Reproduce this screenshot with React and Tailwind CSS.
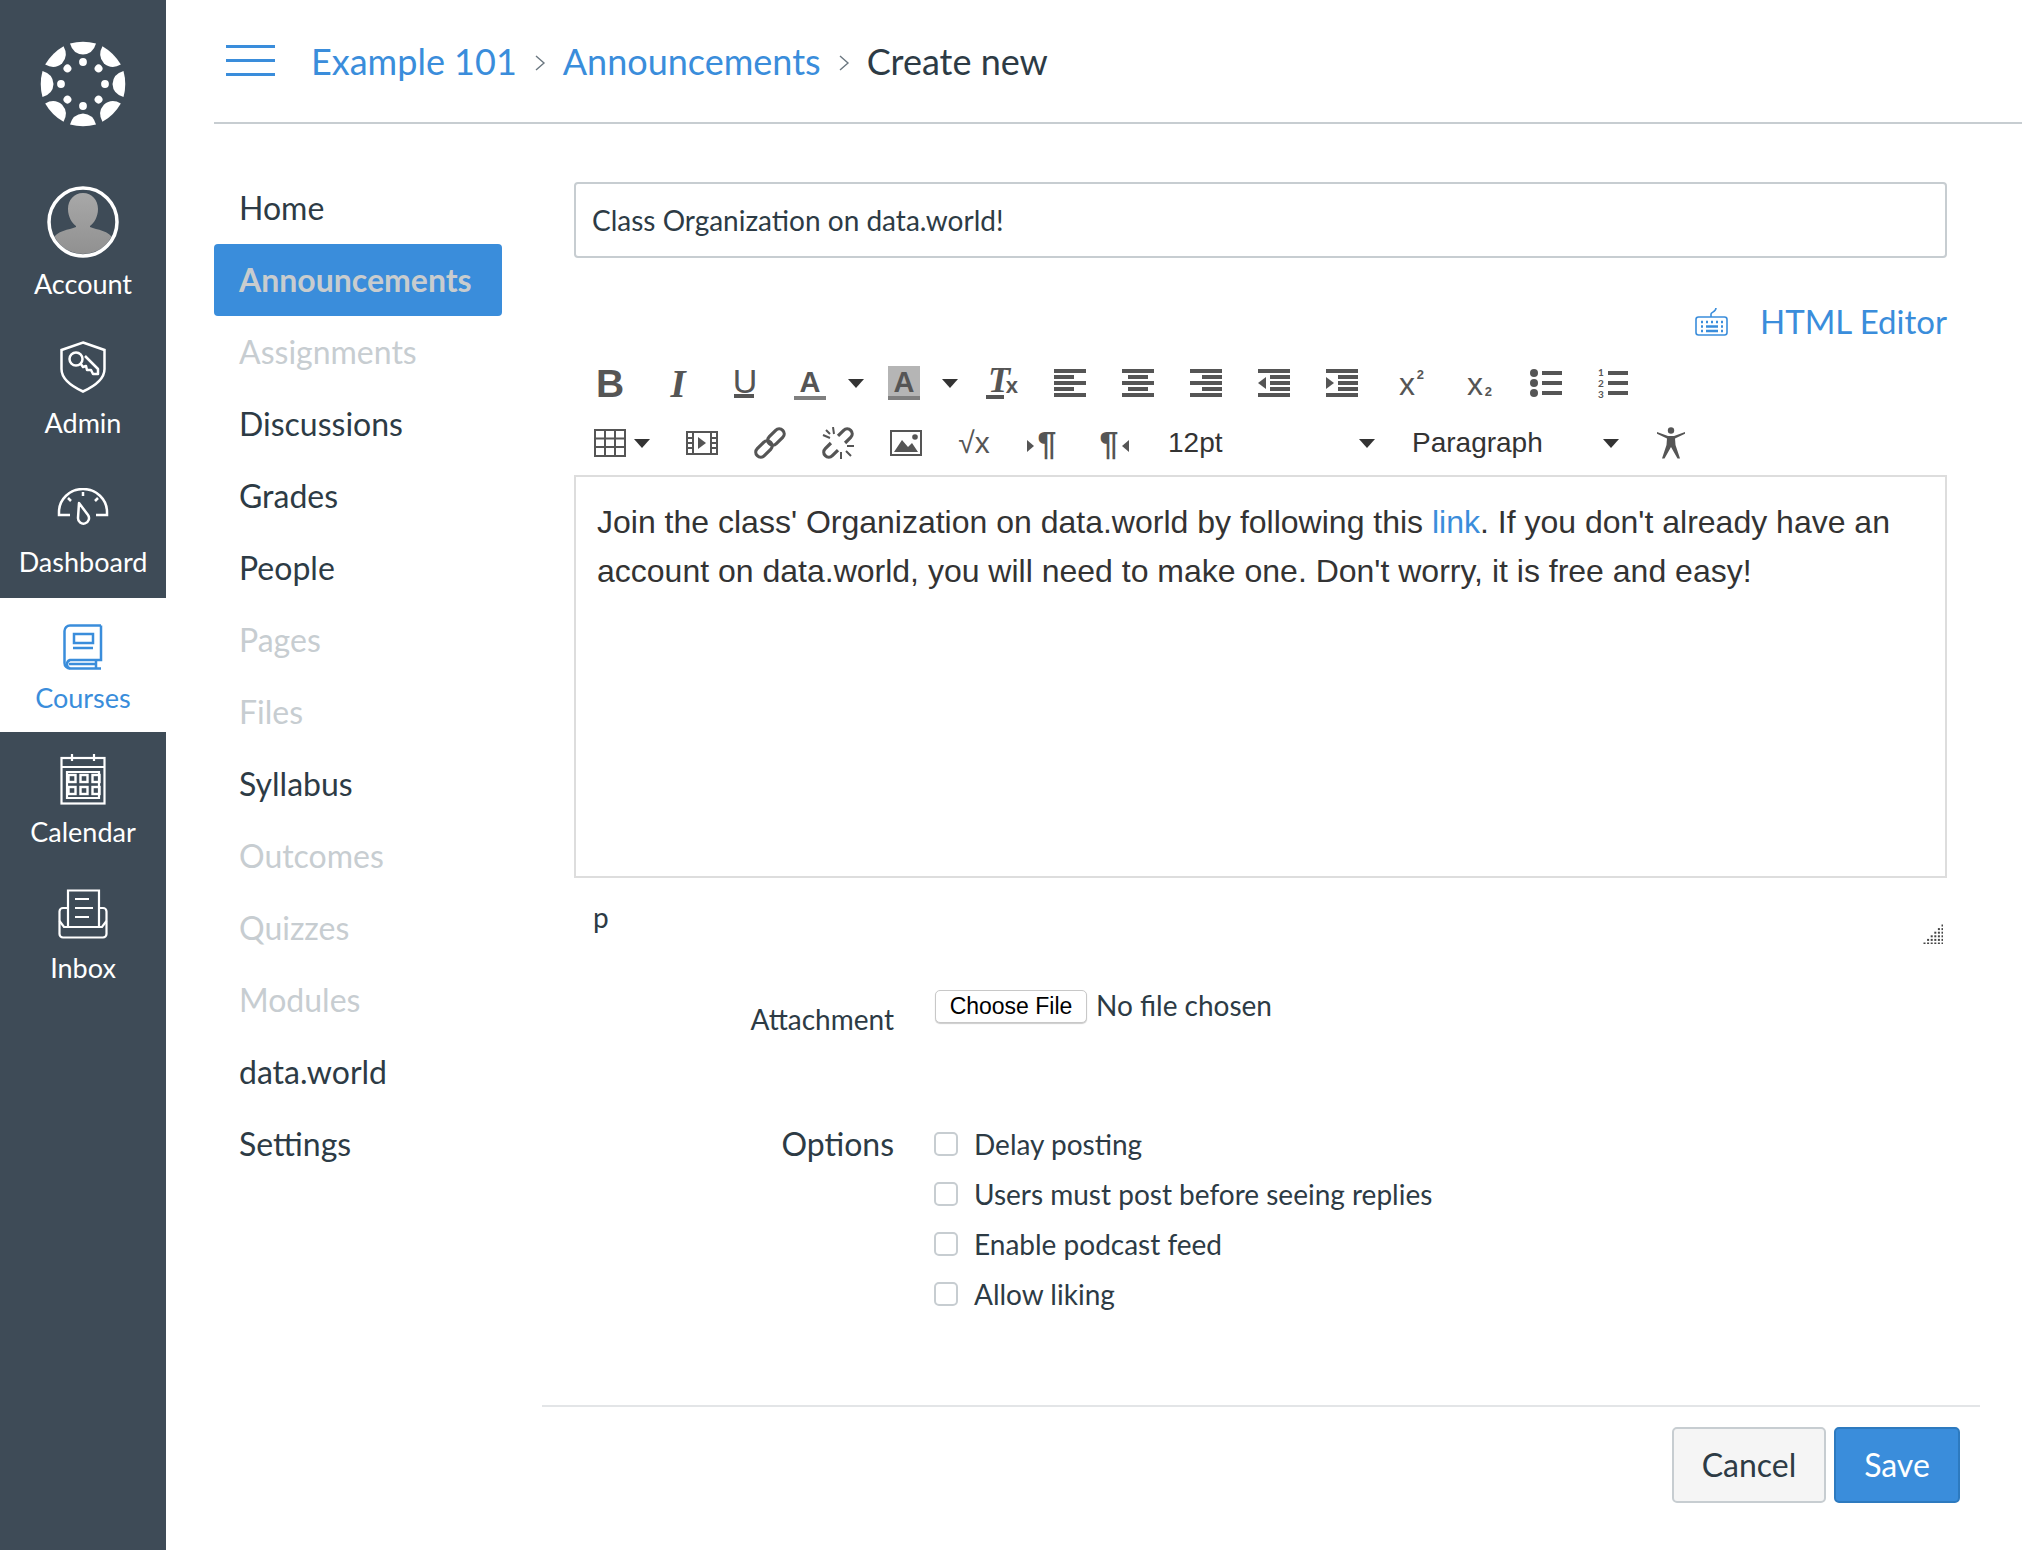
import React from "react";

const INK = "#555";

const Ico = ({ w = 32, h = 32, className = "", children }) => (
  <svg width={w} height={h} viewBox={`0 0 ${w} ${h}`} className={`shrink-0 ${className}`} fill="none">
    {children}
  </svg>
);

const Caret = ({ className = "" }) => (
  <Ico w={16} h={9} className={className}>
    <path d="M0 0H16L8 9Z" fill="#333" />
  </Ico>
);

/* sidebar icons */
const Logo = () => (
  <svg width="86" height="86" viewBox="-43 -43 86 86">
    {[0, 45, 90, 135, 180, 225, 270, 315].map((a) => (
      <g key={a} transform={`rotate(${a})`} fill="#fff">
        <path d="M-13 -40.5Q0 -44 13 -40.5Q10 -30 0 -29.5Q-10 -30 -13 -40.5Z" />
        <circle cx="0" cy="-22" r="3.9" />
      </g>
    ))}
  </svg>
);

const Avatar = () => (
  <svg width="72" height="72" viewBox="0 0 72 72">
    <defs>
      <linearGradient id="av" x1="0" y1="0" x2="0" y2="1">
        <stop offset="0" stopColor="#a8a8a8" />
        <stop offset="1" stopColor="#8f8f8f" />
      </linearGradient>
      <clipPath id="avc">
        <circle cx="36" cy="36" r="32" />
      </clipPath>
    </defs>
    <g clipPath="url(#avc)" fill="url(#av)">
      <path d="M36 7C45 7 51 14 51 23C51 31 47 37 43 40V41C50 44 62 44 67 54V72H5V54C10 44 22 44 29 41V40C25 37 21 31 21 23C21 14 27 7 36 7Z" />
    </g>
    <circle cx="36" cy="36" r="34" stroke="#fff" strokeWidth="3.5" fill="none" />
  </svg>
);

const AdminIcon = () => (
  <svg width="46" height="52" viewBox="0 0 46 52" fill="none" stroke="#fff" strokeWidth="2.5">
    <path d="M23 1.5L44.5 9V28C44.5 38 35 45 23 50.5C11 45 1.5 38 1.5 28V9Z" />
    <circle cx="16" cy="18" r="6.5" />
    <path d="M20.5 22.5L23 26L26 25L27 29L31 29L33 33L38 33L38 28L25 15" strokeLinejoin="round" />
  </svg>
);

const DashIcon = () => (
  <svg width="52" height="37" viewBox="0 0 52 37" fill="none" stroke="#fff" strokeWidth="2.5">
    <path d="M13 27H2V24A24 23 0 0 1 50 24V27H39" />
    <path d="M22 15L31 27A5.5 5.5 0 1 1 21 30Z" strokeLinejoin="round" />
    <path d="M26 4V8M11 10L14 13M41 10L38 13" />
  </svg>
);

const BookIcon = () => (
  <svg width="40" height="46" viewBox="0 0 40 46" fill="none" stroke="#3a8ddb" strokeWidth="2.5">
    <path d="M38 1.5H7A5.5 5.5 0 0 0 1.5 7V39A5.5 5.5 0 0 0 7 44.5H38" />
    <path d="M38 1.5V36H7A4.5 4.5 0 0 0 7 44.5" />
    <path d="M6 40H32M33 36V44" />
    <rect x="11" y="10" width="19" height="9" />
    <path d="M10 24H30" />
  </svg>
);

const CalIcon = () => (
  <svg width="46" height="52" viewBox="0 0 46 52" fill="none" stroke="#fff" strokeWidth="2.2">
    <rect x="1.5" y="5" width="43" height="45.5" />
    <path d="M1.5 14H44.5M12 1V8M34 1V8M7 19H39V45H7Z" />
    {[0, 1].map((r) =>
      [0, 1, 2].map((c) => (
        <rect key={`${r}${c}`} x={8.5 + c * 12} y={22 + r * 12} width="7" height="7" strokeWidth="2.4" />
      ))
    )}
  </svg>
);

const InboxIcon = () => (
  <svg width="50" height="50" viewBox="0 0 50 50" fill="none" stroke="#fff" strokeWidth="2.2">
    <path d="M10 37V1.5H41V37" />
    <path d="M17 10H31M17 19H35M17 28H31" />
    <path d="M10 19H5A3.5 3.5 0 0 0 1.5 22.5V45A3.5 3.5 0 0 0 5 48.5H45A3.5 3.5 0 0 0 48.5 45V22.5A3.5 3.5 0 0 0 45 19H41" />
    <path d="M1.5 32L6 38H44L48.5 32" />
  </svg>
);

/* toolbar icons */
const Lines = ({ rows }) => (
  <Ico>
    {rows.map(([x, w], i) => (
      <rect key={i} x={x} y={2 + i * 6} width={w} height="4" fill={INK} />
    ))}
  </Ico>
);

const Outdent = ({ flip }) => (
  <Ico>
    <rect x="0" y="2" width="32" height="4" fill={INK} />
    <rect x="12" y="8" width="20" height="4" fill={INK} />
    <rect x="12" y="14" width="20" height="4" fill={INK} />
    <rect x="12" y="20" width="20" height="4" fill={INK} />
    <rect x="0" y="26" width="32" height="4" fill={INK} />
    <path d={flip ? "M0 10L8 16L0 22Z" : "M8 10L0 16L8 22Z"} fill={INK} />
  </Ico>
);

const Glyph = ({ className = "", children }) => (
  <span className={`flex h-[34px] w-[32px] shrink-0 items-center justify-center text-[#555] font-['Liberation_Sans',sans-serif] leading-none ${className}`}>
    {children}
  </span>
);

const Bar = ({ className = "" }) => <span className={`absolute bottom-0 left-0 h-[4px] w-full ${className}`} />;

const LinkIcon = () => (
  <Ico>
    <g transform="rotate(-45 16 16)" stroke={INK} strokeWidth="3.2">
      <rect x="-2" y="11" width="19" height="10" rx="5" />
      <rect x="15" y="11" width="19" height="10" rx="5" />
    </g>
  </Ico>
);

const UnlinkIcon = () => (
  <Ico>
    <g transform="rotate(-45 16 16)" stroke={INK} strokeWidth="3.2">
      <path d="M11 11H3A5 5 0 0 0 3 21H11" />
      <path d="M21 11H29A5 5 0 0 1 29 21H21" />
    </g>
    <path d="M1 8L8 11M11 0L12 7M4 3L8 7M24 24L29 29M25 19H32M19 25V32" stroke={INK} strokeWidth="2" />
  </Ico>
);

const TableIcon = () => (
  <Ico h={28}>
    <rect x="1" y="1" width="30" height="26" stroke={INK} strokeWidth="2" />
    <path d="M11 1V27M21 1V27M1 9.5H31M1 18H31" stroke={INK} strokeWidth="2" />
  </Ico>
);

const MediaIcon = () => (
  <Ico h={24}>
    <rect x="1" y="1" width="30" height="22" stroke={INK} strokeWidth="2" />
    <path d="M7 1V23M25 1V23M1 7H7M1 12H7M1 17H7M25 7H31M25 12H31M25 17H31" stroke={INK} strokeWidth="2" />
    <path d="M12 6L20 12L12 18Z" fill={INK} />
  </Ico>
);

const ImageIcon = () => (
  <Ico h={26}>
    <rect x="1" y="1" width="30" height="24" stroke={INK} strokeWidth="2" />
    <path d="M4 22L12 10L18 17L22 13L28 22Z" fill={INK} />
    <circle cx="25" cy="7" r="2.8" fill={INK} />
  </Ico>
);

const AccessIcon = () => (
  <Ico w={28} h={32}>
    <circle cx="14" cy="3.5" r="3.2" fill={INK} />
    <path d="M0 5L11 9H17L28 5L28.5 6.5L18 11.5L18.5 18L23 31.5H20.5L14 20L7.5 31.5H5L9.5 18L10 11.5L-0.5 6.5Z" fill={INK} />
  </Ico>
);

const Keyboard = () => (
  <svg width="33" height="28" viewBox="0 0 33 28" fill="none" className="shrink-0">
    <rect x="1" y="9" width="31" height="18" rx="2.5" stroke="#3a8ddb" strokeWidth="1.6" />
    <path d="M16 9V6C16 4 21 4 21 0" stroke="#3a8ddb" strokeWidth="1.6" />
    <path d="M6 14H8M11 14H13M16 14H18M21 14H23M26 14H28M6 18.5H8M26 18.5H28M11 18.5H23M6 23H8M26 23H28M11 23H23" stroke="#3a8ddb" strokeWidth="2.4" />
  </svg>
);

const Resize = () => (
  <svg width="20" height="20" viewBox="0 0 20 20" className="shrink-0">
    {[0, 1, 2, 3, 4, 5].map((r) =>
      [0, 1, 2, 3, 4, 5].map((c) =>
        c + r >= 5 ? (
          <rect key={`${r}-${c}`} x={c * 3.6 + 0.5} y={r * 3.6 + 0.5} width="2" height="2" fill="#444" />
        ) : null
      )
    )}
  </svg>
);

const Chevron = () => (
  <svg width="12" height="18" viewBox="0 0 12 18" fill="none" className="shrink-0 mt-[4px]">
    <path d="M2 2L10 9L2 16" stroke="#6b7780" strokeWidth="1.4" />
  </svg>
);

const sideItems = [
  { label: "Account", icon: <Avatar />, box: "h-[139px] pb-[25px]", gap: "mb-[12px]" },
  { label: "Admin", icon: <AdminIcon />, box: "h-[139px] pb-[25px]", gap: "mb-[16px]" },
  { label: "Dashboard", icon: <DashIcon />, box: "h-[136px] pb-[22px]", gap: "mb-[23px]" },
  { label: "Courses", icon: <BookIcon />, box: "h-[134px] pb-[20px] bg-white text-[#3a8ddb]", gap: "mb-[14px]" },
  { label: "Calendar", icon: <CalIcon />, box: "h-[136px] pb-[22px]", gap: "mb-[13px]" },
  { label: "Inbox", icon: <InboxIcon />, box: "h-[136px] pb-[22px]", gap: "mb-[15px]" },
];

const navItems = [
  ["Home", "on"],
  ["Announcements", "active"],
  ["Assignments", "off"],
  ["Discussions", "on"],
  ["Grades", "on"],
  ["People", "on"],
  ["Pages", "off"],
  ["Files", "off"],
  ["Syllabus", "on"],
  ["Outcomes", "off"],
  ["Quizzes", "off"],
  ["Modules", "off"],
  ["data.world", "on"],
  ["Settings", "on"],
];

const options = ["Delay posting", "Users must post before seeing replies", "Enable podcast feed", "Allow liking"];

export default function App() {
  return (
    <div className="flex min-h-[1550px] w-full bg-white font-['Lato',sans-serif] text-[#2d3b45]">
      {/* global nav */}
      <aside className="w-[166px] shrink-0 bg-[#3e4b57] text-white">
        <div className="flex h-[184px] justify-center pt-[41px]">
          <div className="h-[86px]">
            <Logo />
          </div>
        </div>
        {sideItems.map((item) => (
          <div key={item.label} className={`flex flex-col items-center justify-end ${item.box}`}>
            <div className={`flex justify-center ${item.gap}`}>{item.icon}</div>
            <span className="text-[27px] leading-[28px]">{item.label}</span>
          </div>
        ))}
      </aside>

      <main className="flex-1 pl-[48px]">
        {/* breadcrumbs */}
        <header className="flex h-[124px] items-center border-b-2 border-[#c7cdd1] pl-[12px]">
          <div className="mb-[2px] flex h-[31px] w-[49px] flex-col justify-between">
            <span className="h-[3px] bg-[#3a8ddb]" />
            <span className="h-[3px] bg-[#3a8ddb]" />
            <span className="h-[3px] bg-[#3a8ddb]" />
          </div>
          <nav className="ml-[36px] flex items-center gap-[17px] text-[36px] leading-none">
            <span className="text-[#3a8ddb]">Example 101</span>
            <Chevron />
            <span className="text-[#3a8ddb]">Announcements</span>
            <Chevron />
            <span>Create new</span>
          </nav>
        </header>

        <div className="flex">
          {/* course nav */}
          <ul className="w-[288px] shrink-0 pt-[48px] text-[32px]">
            {navItems.map(([name, state]) => (
              <li
                key={name}
                className={`flex h-[72px] items-center pl-[25px] ${
                  state === "active"
                    ? "rounded-[4px] bg-[#3a8ddb] font-bold text-[#c8ccce]"
                    : state === "off"
                    ? "text-[#c7cdd1]"
                    : ""
                }`}
              >
                {name}
              </li>
            ))}
          </ul>

          {/* form */}
          <form className="ml-[40px] w-[1438px] shrink-0 pt-[58px]">
            <div className="px-[32px]">
              <div className="flex h-[76px] w-[1373px] items-center rounded-[4px] border-2 border-[#c7cdd1] pl-[16px] text-[28px]">
                Class Organization on data.world!
              </div>

              <div className="mt-[44px] flex h-[40px] w-[1373px] items-center justify-end text-[33px] text-[#3a8ddb]">
                <Keyboard />
                <span className="ml-[32px]">HTML Editor</span>
              </div>

              {/* toolbar row 1 */}
              <div className="mt-[24px] flex h-[34px] items-center pl-[20px]">
                <Glyph className="text-[39px] font-bold">B</Glyph>
                <Glyph className="ml-[36px] text-[39px] font-['Liberation_Serif',serif] italic font-bold">I</Glyph>
                <Glyph className="ml-[35px] relative text-[34px]">
                  <span className="mb-[5px] font-['Liberation_Sans',sans-serif]">U</span>
                  <Bar className="bg-[#555] !bottom-[2px] !left-[5px] !w-[20px]" />
                </Glyph>
                <Glyph className="relative ml-[33px] text-[29px] font-bold">
                  <span className="mb-[2px]">A</span>
                  <Bar className="bg-[#7f7f7f]" />
                </Glyph>
                <Caret className="ml-[22px]" />
                <Glyph className="relative ml-[24px] bg-[#b5b5b5] text-[29px] font-bold">
                  <span className="mb-[2px]">A</span>
                  <Bar className="bg-[#7f7f7f]" />
                </Glyph>
                <Caret className="ml-[22px]" />
                <Glyph className="relative ml-[28px] text-[36px] font-['Liberation_Serif',serif] italic font-bold">
                  <span className="mb-[6px] mr-[6px]">T</span>
                  <span className="absolute bottom-[3px] right-0 text-[22px] font-['Liberation_Sans',sans-serif] not-italic">x</span>
                  <Bar className="bg-[#555] !bottom-[1px] !w-[18px]" />
                </Glyph>
                <div className="ml-[36px]">
                  <Lines rows={[[0, 32], [0, 20], [0, 32], [0, 20], [0, 32]]} />
                </div>
                <div className="ml-[36px]">
                  <Lines rows={[[0, 32], [6, 20], [0, 32], [6, 20], [0, 32]]} />
                </div>
                <div className="ml-[36px]">
                  <Lines rows={[[0, 32], [12, 20], [0, 32], [12, 20], [0, 32]]} />
                </div>
                <div className="ml-[36px]">
                  <Outdent />
                </div>
                <div className="ml-[36px]">
                  <Outdent flip />
                </div>
                <Glyph className="relative ml-[36px] text-[32px]">
                  <span className="mt-[2px] mr-[6px]">x</span>
                  <span className="absolute right-[2px] top-[2px] text-[13px] font-bold">2</span>
                </Glyph>
                <Glyph className="relative ml-[36px] text-[32px]">
                  <span className="mt-[2px] mr-[6px]">x</span>
                  <span className="absolute bottom-[2px] right-[2px] text-[13px] font-bold">2</span>
                </Glyph>
                <div className="ml-[36px]">
                  <Ico>
                    {[6, 16, 26].map((y) => (
                      <g key={y}>
                        <circle cx="4" cy={y} r="4" fill={INK} />
                        <rect x="12" y={y - 2} width="20" height="4" fill={INK} />
                      </g>
                    ))}
                  </Ico>
                </div>
                <div className="relative ml-[36px] flex h-[32px] w-[32px] shrink-0 flex-col justify-between text-[10px] font-bold leading-[10px] text-[#555]">
                  <span>1</span>
                  <span>2</span>
                  <span>3</span>
                  <span className="absolute left-[10px] top-[4px] h-[4px] w-[20px] bg-[#555]" />
                  <span className="absolute left-[10px] top-[14px] h-[4px] w-[20px] bg-[#555]" />
                  <span className="absolute left-[10px] top-[24px] h-[4px] w-[20px] bg-[#555]" />
                </div>
              </div>

              {/* toolbar row 2 */}
              <div className="mt-[26px] flex h-[34px] items-center pl-[20px]">
                <TableIcon />
                <Caret className="ml-[8px]" />
                <div className="ml-[36px]">
                  <MediaIcon />
                </div>
                <div className="ml-[36px]">
                  <LinkIcon />
                </div>
                <div className="ml-[36px]">
                  <UnlinkIcon />
                </div>
                <div className="ml-[36px]">
                  <ImageIcon />
                </div>
                <Glyph className="ml-[36px] text-[30px]">√x</Glyph>
                <Glyph className="relative ml-[37px] w-[30px] text-[34px] font-bold">
                  <span className="ml-[8px]">¶</span>
                  <span className="absolute left-0 top-[14px] h-0 w-0 border-y-[6px] border-l-[7px] border-y-transparent border-l-[#555]" />
                </Glyph>
                <Glyph className="relative ml-[38px] w-[30px] text-[34px] font-bold">
                  <span className="mr-[8px]">¶</span>
                  <span className="absolute right-0 top-[14px] h-0 w-0 border-y-[6px] border-r-[7px] border-y-transparent border-r-[#555]" />
                </Glyph>
                <div className="ml-[39px] flex w-[207px] shrink-0 items-center justify-between font-['Liberation_Sans',sans-serif] text-[28px] text-[#333]">
                  <span>12pt</span>
                  <Caret />
                </div>
                <div className="ml-[37px] flex w-[207px] shrink-0 items-center justify-between font-['Liberation_Sans',sans-serif] text-[28px] text-[#333]">
                  <span>Paragraph</span>
                  <Caret />
                </div>
                <div className="ml-[38px]">
                  <AccessIcon />
                </div>
              </div>

              {/* editor body */}
              <div className="mt-[15px] h-[403px] w-[1373px] border-2 border-[#ddd] px-[21px] pt-[21px] font-['Liberation_Sans',sans-serif] text-[32px] leading-[49px] text-[#333]">
                Join the class' Organization on data.world by following this <span className="text-[#3a8ddb]">link</span>. If you don't already have an account on data.world, you will need to make one. Don't worry, it is free and easy!
              </div>

              <div className="flex h-[66px] w-[1373px] items-end justify-between pl-[19px] pr-[4px] text-[28px] leading-[36px]">
                <span className="mb-[9px]">p</span>
                <Resize />
              </div>

              {/* attachment */}
              <div className="mt-[46px] flex items-start">
                <span className="mt-[10px] w-[320px] text-right text-[28px] leading-[38px]">Attachment</span>
                <button type="button" className="ml-[41px] h-[33px] w-[152px] rounded-[5px] border border-[#c8c8c8] bg-white font-['Liberation_Sans',sans-serif] text-[23px] leading-none text-black shadow-[0_1px_1px_rgba(0,0,0,0.2)]">
                  Choose File
                </button>
                <span className="ml-[9px] mt-[-3px] text-[28px] leading-[36px]">No file chosen</span>
              </div>

              {/* options */}
              <div className="mt-[88px] flex items-start">
                <span className="mt-[-2px] w-[320px] text-right text-[32px] leading-[40px]">Options</span>
                <div className="ml-[40px] flex flex-col gap-[14px]">
                  {options.map((o) => (
                    <label key={o} className="flex h-[36px] items-center text-[28px]">
                      <input type="checkbox" className="h-[24px] w-[24px] appearance-none rounded-[5px] border-2 border-[#c7cdd1] bg-white" />
                      <span className="ml-[16px]">{o}</span>
                    </label>
                  ))}
                </div>
              </div>
            </div>

            {/* actions */}
            <div className="mt-[93px] flex justify-end gap-[8px] border-t-2 border-[#e3e5e7] pr-[20px] pt-[20px] text-[32px]">
              <button type="button" className="h-[76px] w-[154px] rounded-[5px] border-2 border-[#c7cdd1] bg-[#f5f5f5]">
                Cancel
              </button>
              <button type="button" className="h-[76px] w-[126px] rounded-[5px] border-2 border-[#2d7abf] bg-[#3a8ddb] text-white">
                Save
              </button>
            </div>
          </form>
        </div>
      </main>
    </div>
  );
}
